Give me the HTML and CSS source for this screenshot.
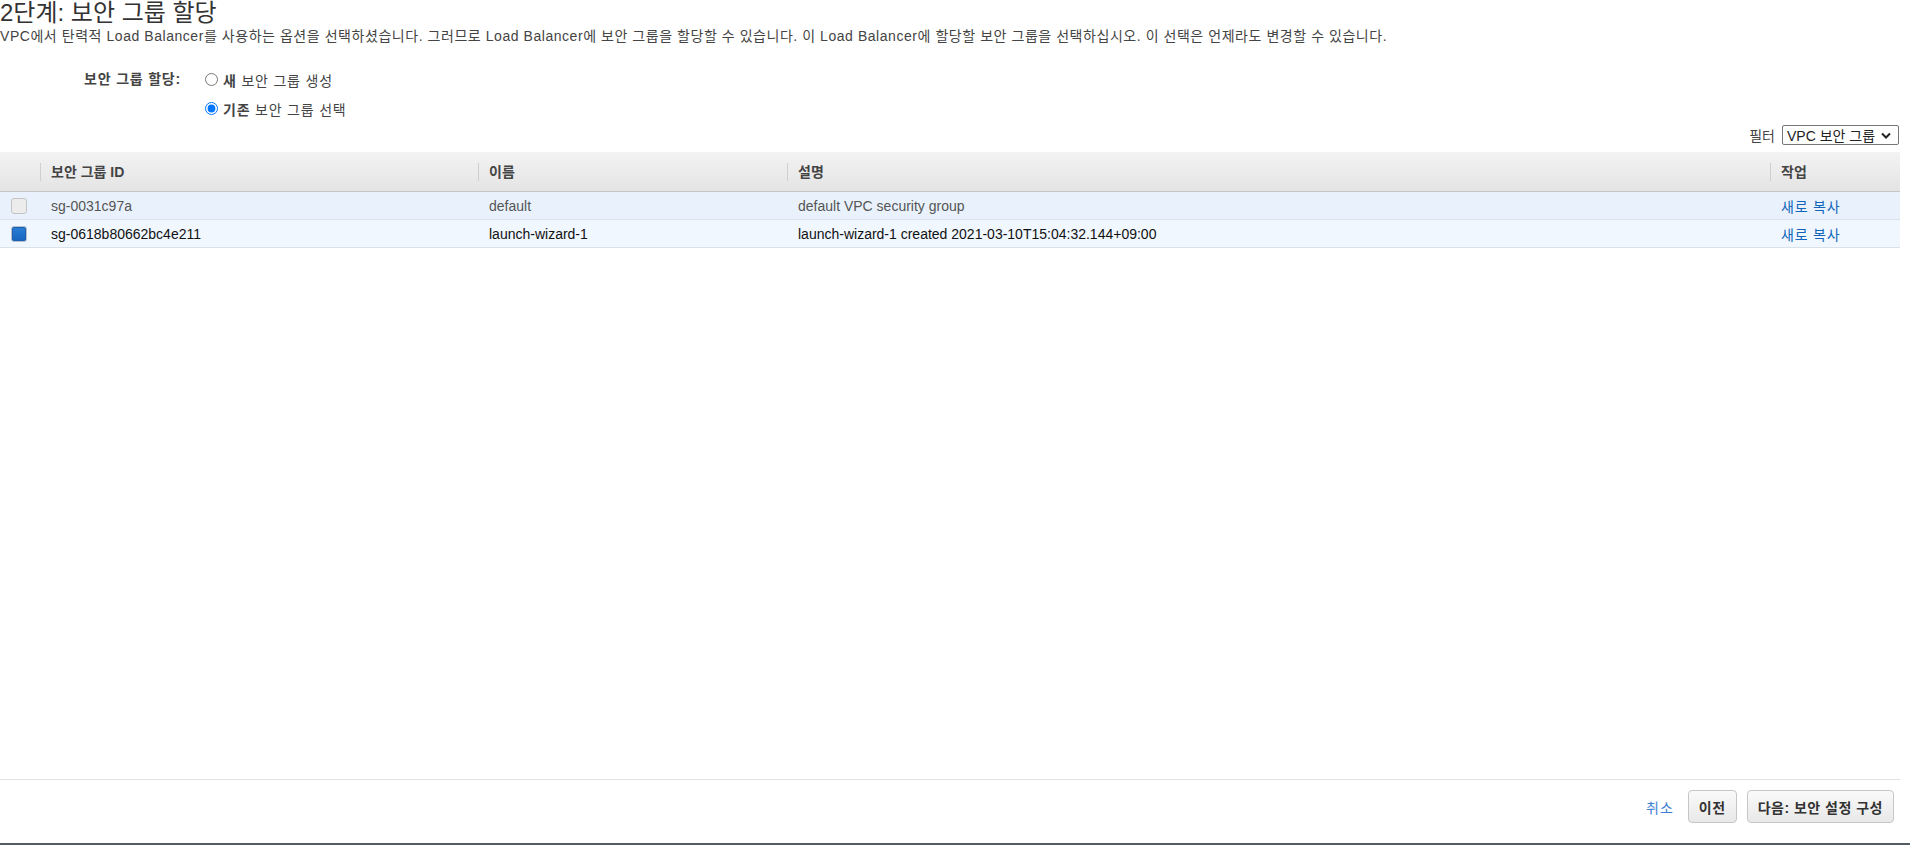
FILE: index.html
```html
<!DOCTYPE html>
<html lang="ko">
<head>
  <meta charset="UTF-8" />
  <title>2단계: 보안 그룹 할당</title>
  <link rel="stylesheet" href="styles.css">
</head>
<body>
  <div class="page">
    <main class="content">
      <h1 class="step-title">2단계: 보안 그룹 할당</h1>
      <p class="step-desc">VPC에서 탄력적 Load Balancer를 사용하는 옵션을 선택하셨습니다. 그러므로 Load Balancer에 보안 그룹을 할당할 수 있습니다. 이 Load Balancer에 할당할 보안 그룹을 선택하십시오. 이 선택은 언제라도 변경할 수 있습니다.</p>

      <div class="assign-form">
        <div class="form-label">보안 그룹 할당:</div>
        <div class="form-options">
          <label class="radio-option"><input type="radio" name="sg-mode"><span><b>새</b> 보안 그룹 생성</span></label>
          <label class="radio-option"><input type="radio" name="sg-mode" checked><span><b>기존</b> 보안 그룹 선택</span></label>
        </div>
      </div>

      <div class="filter-bar">
        <span>필터</span>
        <div class="filter-select">
          <span>VPC 보안 그룹</span>
          <svg width="10" height="7" viewBox="0 0 10 7"><path d="M1 1.5 L5 5.5 L9 1.5" fill="none" stroke="#222" stroke-width="2"/></svg>
        </div>
      </div>

      <table class="sg-table">
        <colgroup>
          <col style="width:40px">
          <col style="width:438px">
          <col style="width:309px">
          <col style="width:983px">
          <col style="width:130px">
        </colgroup>
        <thead>
          <tr>
            <th></th>
            <th><div class="col-head">보안 그룹 ID</div></th>
            <th><div class="col-head">이름</div></th>
            <th><div class="col-head">설명</div></th>
            <th><div class="col-head">작업</div></th>
          </tr>
        </thead>
        <tbody>
          <tr class="row-disabled">
            <td><div class="row-check"></div></td>
            <td>sg-0031c97a</td>
            <td>default</td>
            <td>default VPC security group</td>
            <td><a class="copy-link" href="#">새로 복사</a></td>
          </tr>
          <tr class="row-selected">
            <td><div class="row-check checked"></div></td>
            <td>sg-0618b80662bc4e211</td>
            <td>launch-wizard-1</td>
            <td>launch-wizard-1 created 2021-03-10T15:04:32.144+09:00</td>
            <td><a class="copy-link" href="#">새로 복사</a></td>
          </tr>
        </tbody>
      </table>
    </main>

    <footer class="wizard-footer">
      <div class="footer-actions">
        <a class="cancel-link" href="#">취소</a>
        <button class="btn">이전</button>
        <button class="btn">다음: 보안 설정 구성</button>
      </div>
    </footer>
    <div class="console-bar"></div>
  </div>
</body>
</html>
```

FILE: styles.css
```css
body {
  margin: 0;
  font-family: "Liberation Sans", "Noto Sans CJK KR", sans-serif;
  font-size: 14px;
  color: #444;
  background: #fff;
  overflow: hidden;
}

.page {
  height: 845px;
  display: flex;
  flex-direction: column;
}

.content {
  flex: 1;
  padding-right: 10px;
}

.step-title {
  margin: 0;
  font-size: 24px;
  font-weight: normal;
  line-height: 26px;
  color: #333;
}

.step-desc {
  margin: 0;
  line-height: 20px;
  letter-spacing: 0.55px;
  color: #444;
}

.assign-form {
  display: flex;
  margin-top: 19px;
  letter-spacing: 0.8px;
}

.form-label {
  width: 181px;
  text-align: right;
  font-weight: bold;
  line-height: 29px;
}

.form-options {
  margin-left: 24px;
}

.radio-option {
  display: flex;
  align-items: center;
  gap: 5px;
  height: 29px;
}

.radio-option input {
  margin: 0;
  width: 13px;
  height: 13px;
}

.filter-bar {
  display: flex;
  justify-content: flex-end;
  align-items: center;
  gap: 7px;
  height: 20px;
  margin-top: 2px;
  padding-right: 1px;
}

.filter-select {
  display: flex;
  align-items: center;
  gap: 6px;
  width: 107px;
  height: 18px;
  padding: 0 4px;
  border: 1px solid #767676;
  border-radius: 2px;
  color: #222;
  overflow: hidden;
  white-space: nowrap;
}

.sg-table {
  width: 100%;
  margin-top: 7px;
  border-collapse: collapse;
  table-layout: fixed;
}

.sg-table th {
  height: 39px;
  padding: 0;
  background: linear-gradient(#f3f3f3, #e4e4e4);
  border-bottom: 1px solid #c5c5c5;
  text-align: left;
}

.col-head {
  height: 18px;
  line-height: 18px;
  padding-left: 10px;
  border-left: 1px solid #cfcfcf;
  font-weight: bold;
  color: #444;
}

.sg-table td {
  height: 27px;
  padding: 0 11px;
  border-bottom: 1px solid #dbe1e8;
  white-space: nowrap;
}

.row-disabled td {
  background: #e9f2fc;
  color: #555;
}

.row-selected td {
  background: #f0f7fe;
  color: #111;
}

.row-check {
  width: 14px;
  height: 14px;
  border: 1px solid #c4c4c4;
  border-radius: 3px;
  background: #ececec;
}

.row-check.checked {
  border-color: #b9c3cf;
  background: linear-gradient(#2b7fd6, #1764bd);
  box-shadow: inset 0 0 0 1px #1a5fb0;
}

.copy-link {
  color: #1166bb;
  letter-spacing: 0.8px;
  text-decoration: none;
}

.wizard-footer {
  height: 63px;
  margin-right: 10px;
  border-top: 1px solid #e3e3e3;
}

.footer-actions {
  display: flex;
  justify-content: flex-end;
  align-items: center;
  padding: 10px 6px 0 0;
}

.cancel-link {
  margin-right: 14px;
  color: #3d80d3;
  letter-spacing: 1px;
  text-decoration: none;
}

.btn {
  height: 33px;
  margin-left: 10px;
  padding: 0 10px;
  border: 1px solid #c6c6c6;
  border-radius: 4px;
  background: linear-gradient(#fafafa, #e8e8e8);
  font-family: inherit;
  font-size: 14px;
  font-weight: bold;
  letter-spacing: 0.5px;
  color: #333;
}

.cancel-link + .btn {
  margin-left: 0;
}

.console-bar {
  height: 2px;
  background: #545b64;
}
```
